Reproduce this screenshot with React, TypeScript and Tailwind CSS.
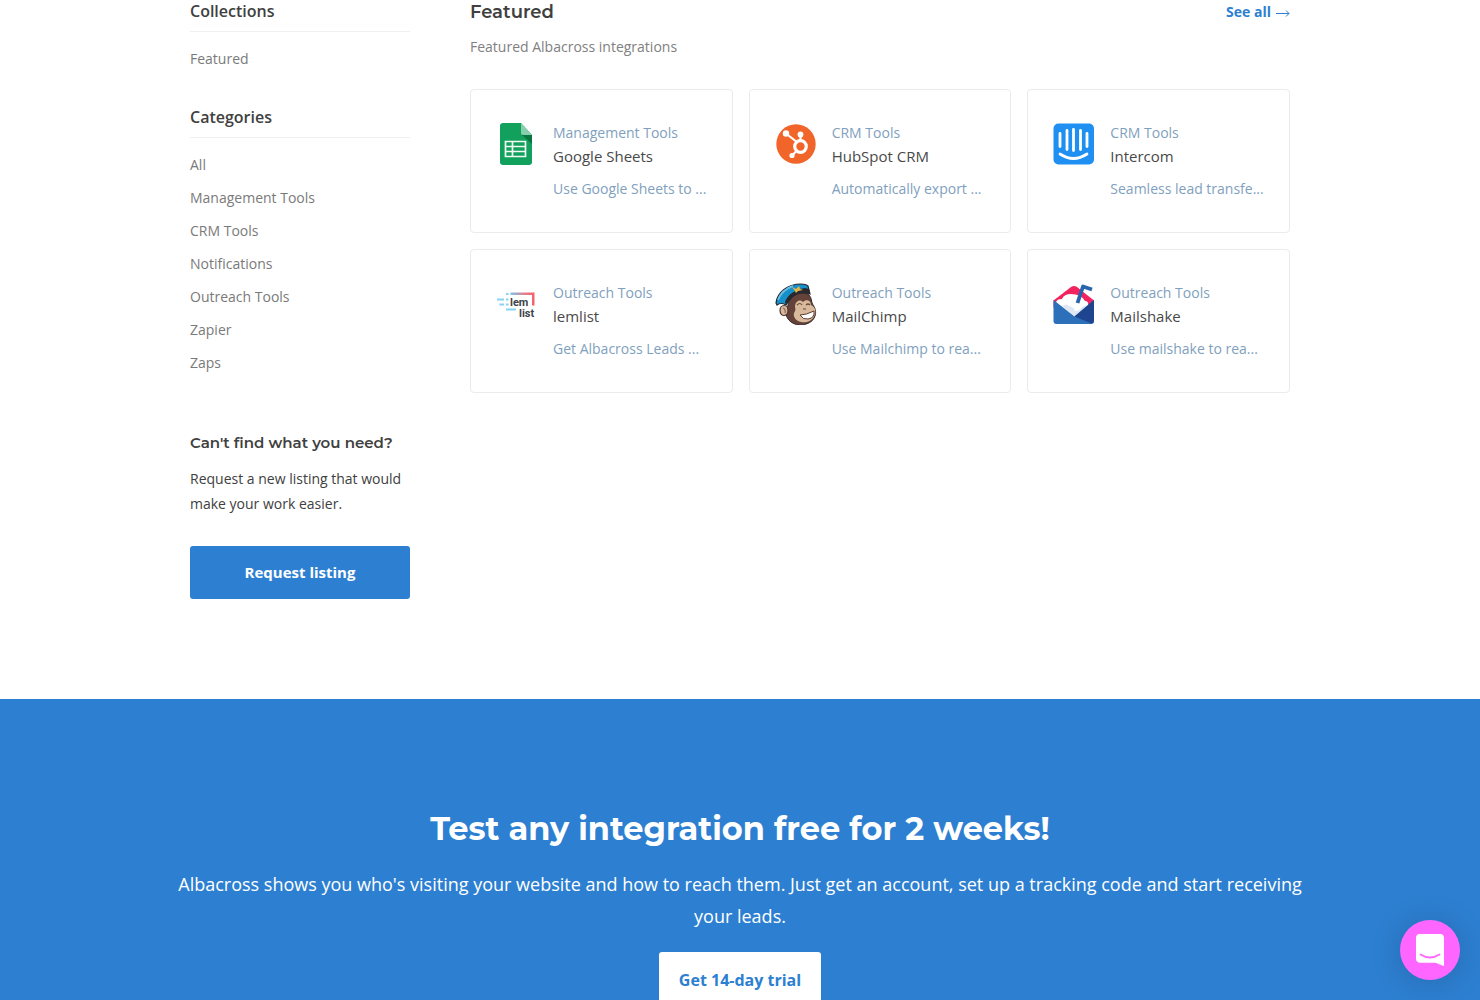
import type { ReactNode } from "react";

const CATEGORIES = [
  "All",
  "Management Tools",
  "CRM Tools",
  "Notifications",
  "Outreach Tools",
  "Zapier",
  "Zaps",
];

function SheetsLogo() {
  return (
    <svg viewBox="0 0 42 42" className="h-[42px] w-[42px]" aria-hidden="true">
      <path d="M7 0h18l11 12v27a3 3 0 0 1-3 3H7a3 3 0 0 1-3-3V3a3 3 0 0 1 3-3z" fill="#12a15c" />
      <path d="M26 12l10 9v-9z" fill="#0b7541" />
      <path d="M25 0l11 12H27a2 2 0 0 1-2-2z" fill="#87ceac" />
      <path
        d="M9.500 18.500h20v15h-20zM9.500 23.500h20M9.500 28.500h20M16.500 18.500v15"
        fill="none"
        stroke="#f1faf4"
        strokeWidth="1.700"
      />
    </svg>
  );
}

function HubSpotLogo() {
  return (
    <svg viewBox="0 0 42 42" className="h-[42px] w-[42px]" aria-hidden="true">
      <circle cx="21" cy="21" r="19.700" fill="#f1652a" />
      <g stroke="#fff" fill="none">
        <path d="M11 10.500l11.500 9M25.500 12v6M22.500 27l-5 5" strokeWidth="2.200" />
        <circle cx="25.500" cy="23.500" r="5.800" strokeWidth="3.200" />
      </g>
      <g fill="#fff">
        <circle cx="11" cy="10.500" r="3.200" />
        <circle cx="25.500" cy="11.500" r="2.900" />
        <circle cx="17" cy="32.500" r="2.600" />
      </g>
    </svg>
  );
}

function IntercomLogo() {
  return (
    <svg viewBox="0 0 42 42" className="h-[42px] w-[42px]" aria-hidden="true">
      <rect x="0.500" y="0.500" width="40.500" height="41" rx="5" fill="#1f8ff1" />
      <path
        d="M7 10.500v13M14 7.500v19M20.500 6.500v21M27.500 7.500v19M34 10.500v13M7 31q13.500 9 27 0"
        fill="none"
        stroke="#fff"
        strokeWidth="2.800"
        strokeLinecap="round"
      />
    </svg>
  );
}

function LemlistLogo() {
  return (
    <svg viewBox="0 0 42 42" className="h-[42px] w-[42px]" aria-hidden="true">
      <defs>
        <linearGradient id="lem" x1="0" x2="1">
          <stop offset="0" stopColor="#7dc4ea" />
          <stop offset="0.600" stopColor="#e5808c" />
          <stop offset="1" stopColor="#f4616a" />
        </linearGradient>
      </defs>
      <path d="M14.500 9.500h24v13H36V12H14.500z" fill="url(#lem)" />
      <path
        d="M10 11h2.500M1 16.500h7M10 16.500h2.500M3.500 21.500H8M10 21.500h2.500M10 26.500h10"
        fill="none"
        stroke="#86d3f5"
        strokeWidth="2.200"
      />
      <g fontSize="11" fontWeight="700" fill="#414347" fontFamily="Roboto, sans-serif">
        <text x="14" y="22.500">
          lem
        </text>
        <text x="23" y="33.500">
          list
        </text>
      </g>
    </svg>
  );
}

function MailChimpLogo() {
  return (
    <svg viewBox="0 0 42 42" className="h-[42px] w-[42px]" aria-hidden="true">
      <path
        d="M13 22C15 12 25 6 34 12c3 3 2 7 4 10 3 4 3 8 2 11-2 6-8 9-16 9-7-1-12-5-13-11z"
        fill="#654239"
        stroke="#36292a"
        strokeWidth="1"
      />
      <path
        d="M20 24c0-6 5-8 8-5 3-3 8-2 8 3 4 2 5 5 4 9-2 7-8 9-14 8-5-1-8-5-7-9 1-2 2-3 1-6z"
        fill="#d9b99b"
      />
      <ellipse cx="9" cy="27.500" rx="4" ry="5" fill="#d9b99b" stroke="#4e3631" strokeWidth="1.200" />
      <path d="M8 25q3 1 2 5" fill="none" stroke="#8d6755" strokeWidth="1.200" />
      <path
        d="M1 20C2 10 12 1 26 1q5 0 7 2l2 8q-11-3-18 3-4 4-6 8-5-3-9 0z"
        fill="#178fc9"
        stroke="#29292d"
        strokeWidth="1.200"
      />
      <path d="M10 19C13 11 20 7 30 5l4 1 1 5q-10-3-17 3-5 4-7 8z" fill="#29292d" />
      <path d="M3 17C6 9 12 5 18 3" fill="none" stroke="#67bce1" strokeWidth="2" />
      <path d="M17 4l4 2 3-3 1 3 3 1-5 1-2 2-1-2z" fill="#e8b742" />
      <path d="M22 22q3-3 5 0M31 22q2-2 4 0M28 26h3" fill="none" stroke="#6b4a3c" strokeWidth="1.200" />
      <path d="M25 32q6 0 14-4 1 7-6 8-5 1-8-4z" fill="#fff" stroke="#5c3b30" strokeWidth="1" />
    </svg>
  );
}

function MailshakeLogo() {
  return (
    <svg viewBox="0 0 42 42" className="h-[42px] w-[42px]" aria-hidden="true">
      <path d="M0.500 17.500L18 4q3-1.800 6 0l17 13.500v7H.5z" fill="#f2235f" />
      <path d="M3 20q0-4 6-4 2-5 9-5 10 0 14 7 4 0 3 5L22 34z" fill="#fff" />
      <path d="M9 23q5-3 7 0 5 1 6 5 5 0 7-4l6-2-13 12z" fill="#dfe6f4" />
      <path d="M24.500 20L30 3.500l9 3" fill="none" stroke="#2665ae" strokeWidth="3.800" strokeLinejoin="round" />
      <path d="M0.500 17l21 16.500L41 17v21a3 3 0 0 1-3 3H3.500a3 3 0 0 1-3-3z" fill="#2b70b9" />
      <path d="M41 17L21.500 33.500l17 7q2.500-.500 2.500-2.500z" fill="#1f4590" />
    </svg>
  );
}

type Integration = {
  category: string;
  name: string;
  text: string;
  logo: ReactNode;
};

const INTEGRATIONS: Integration[] = [
  { category: "Management Tools", name: "Google Sheets", text: "Use Google Sheets to ...", logo: <SheetsLogo /> },
  { category: "CRM Tools", name: "HubSpot CRM", text: "Automatically export ...", logo: <HubSpotLogo /> },
  { category: "CRM Tools", name: "Intercom", text: "Seamless lead transfe...", logo: <IntercomLogo /> },
  { category: "Outreach Tools", name: "lemlist", text: "Get Albacross Leads ...", logo: <LemlistLogo /> },
  { category: "Outreach Tools", name: "MailChimp", text: "Use Mailchimp to rea...", logo: <MailChimpLogo /> },
  { category: "Outreach Tools", name: "Mailshake", text: "Use mailshake to rea...", logo: <MailshakeLogo /> },
];

function LinkGroup({ title, items }: { title: string; items: string[] }) {
  return (
    <section>
      <h2 className="border-b border-[#f0f0f0] pb-[9px] text-base leading-[22px] font-semibold">{title}</h2>
      <ul className="mt-[10px] text-sm leading-[33px] text-[#7a7a7a]">
        {items.map((item) => (
          <li key={item}>
            <a href="#" className="hover:text-[#2d7fd1]">
              {item}
            </a>
          </li>
        ))}
      </ul>
    </section>
  );
}

function IntegrationCard({ item }: { item: Integration }) {
  return (
    <a
      href="#"
      className="flex gap-[15px] rounded border border-[#ebebeb] pt-8 pr-6 pb-[31px] pl-[25px] hover:border-[#2d7fd1]"
    >
      <span className="mt-px shrink-0">{item.logo}</span>
      <span className="flex min-w-0 flex-col text-sm leading-6 text-[#819fbe]">
        <span className="leading-[22px]">{item.category}</span>
        <span className="text-[15px] leading-6 text-[#494949]">{item.name}</span>
        <span className="mt-[9px] whitespace-nowrap">{item.text}</span>
      </span>
    </a>
  );
}

export default function App() {
  return (
    <div className="min-h-screen bg-white font-['Open_Sans',sans-serif] text-[#404040]">
      <div className="mx-auto flex max-w-[1100px] gap-[60px] pb-[100px]">
        <aside className="w-[220px] shrink-0">
          <div className="flex flex-col gap-[31px]">
            <LinkGroup title="Collections" items={["Featured"]} />
            <LinkGroup title="Categories" items={CATEGORIES} />
          </div>
          <h3 className="mt-[54px] font-['Montserrat',Inter,sans-serif] text-[15px] leading-5 font-semibold whitespace-nowrap">
            Can't find what you need?
          </h3>
          <p className="mt-[13px] text-sm leading-[25px]">Request a new listing that would make your work easier.</p>
          <button
            type="button"
            className="mt-[30px] h-[53px] w-full rounded-[3px] bg-[#2d7fd1] text-[15px] font-bold text-white"
          >
            Request listing
          </button>
        </aside>

        <main className="min-w-0 flex-1">
          <div className="flex items-center justify-between leading-6">
            <h2 className="font-['Montserrat',Inter,sans-serif] text-lg leading-6 font-semibold">Featured</h2>
            <a href="#" className="flex items-center gap-1 text-sm leading-6 font-bold text-[#2d7fd1]">
              See all
              <svg viewBox="0 0 15 10" className="mt-0.5 h-[10px] w-[15px]" fill="none" stroke="currentColor" aria-hidden="true">
                <path d="M1 5.500h13M11 2.500l3 3-3 3" />
              </svg>
            </a>
          </div>
          <p className="mt-[11px] text-sm leading-6 text-[#808080]">Featured Albacross integrations</p>
          <div className="mt-[30px] grid grid-cols-3 gap-4">
            {INTEGRATIONS.map((item) => (
              <IntegrationCard key={item.name} item={item} />
            ))}
          </div>
        </main>
      </div>

      <section className="bg-[#2d7fd1] pt-[110px] pb-24 text-center text-white">
        <div className="mx-auto max-w-[1140px]">
          <h2 className="font-['Montserrat',Inter,sans-serif] text-[32px] leading-10 font-bold">
            Test any integration free for 2 weeks!
          </h2>
          <p className="mt-[19px] text-lg leading-8">
            Albacross shows you who's visiting your website and how to reach them. Just get an account, set up a
            tracking code and start receiving your leads.
          </p>
          <a
            href="#"
            className="mt-5 inline-block rounded-[3px] bg-white px-5 py-4 text-base leading-6 font-bold text-[#2d7fd1]"
          >
            Get 14-day trial
          </a>
        </div>
      </section>

      <button
        type="button"
        aria-label="Open chat"
        className="fixed right-5 bottom-5 flex h-[60px] w-[60px] items-center justify-center rounded-full bg-[#ff66ff] shadow-[0_2px_32px_rgba(0,0,0,0.16)]"
      >
        <svg viewBox="0 0 28 32" className="h-8 w-7" aria-hidden="true">
          <path d="M28 32s-4.714-1.855-8.527-3.340H3.437C1.540 28.660 0 27.026 0 25.013V3.644C0 1.633 1.540 0 3.437 0h21.125C26.460 0 28 1.633 28 3.644z" fill="#fff" />
          <path d="M4.500 20.500q9.500 6 19 0" fill="none" stroke="#ff66ff" strokeWidth="1.800" strokeLinecap="round" />
        </svg>
      </button>
    </div>
  );
}
